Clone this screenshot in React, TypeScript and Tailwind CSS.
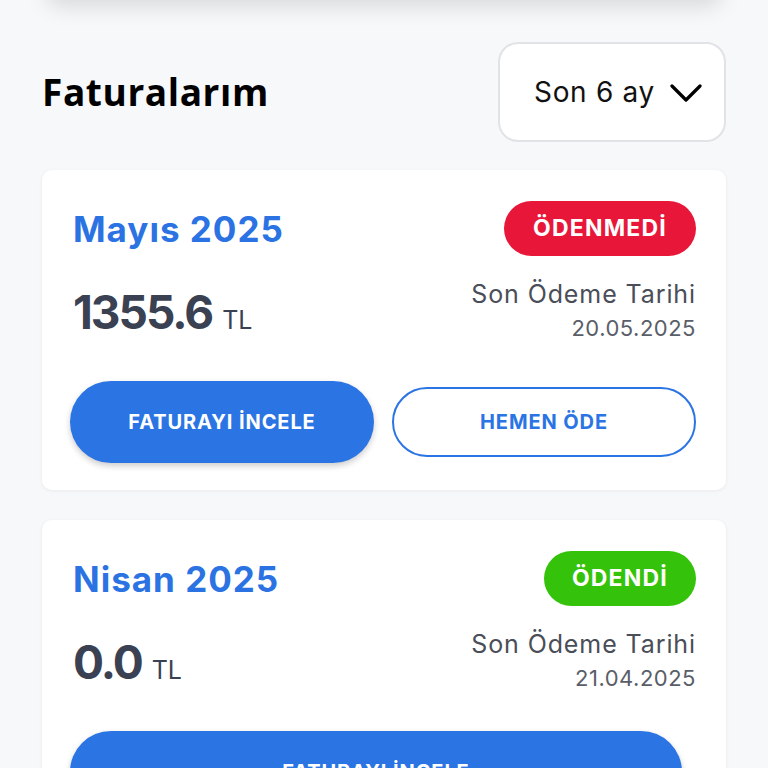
type Invoice = {
  month: string;
  amount: string;
  due: string;
  paid: boolean;
};

const invoices: Invoice[] = [
  { month: "Mayıs 2025", amount: "1355.6", due: "20.05.2025", paid: false },
  { month: "Nisan 2025", amount: "0.0", due: "21.04.2025", paid: true },
];

function InvoiceCard({ inv }: { inv: Invoice }) {
  return (
    <div className="bg-white rounded-[10px] shadow-[0_1px_4px_rgba(0,0,0,0.06)] pl-[31px] pr-[30px] pt-[31px] pb-[27px]">
      <div className="flex justify-between items-start">
        <div className="text-[35px] leading-[56px] font-bold text-[#2b73e3] tracking-[1px]">{inv.month}</div>
        <div
          className={
            inv.paid
              ? "h-[55px] px-[28px] rounded-full bg-[#35c20b] text-white text-[23px] font-bold flex items-center tracking-[1.2px]"
              : "h-[55px] px-[29px] rounded-full bg-[#e8173a] text-white text-[23px] font-bold flex items-center tracking-[1.2px]"
          }
        >
          {inv.paid ? "ÖDENDİ" : "ÖDENMEDİ"}
        </div>
      </div>
      <div className="flex justify-between items-start mt-[21px]">
        <div className="flex items-baseline gap-[10px] mt-[10px]">
          <span className="text-[46px] leading-[48px] font-bold text-[#3a4152] tracking-[-2px]">{inv.amount}</span>
          <span className="text-[25px] text-[#3a4152]">TL</span>
        </div>
        <div className="text-right">
          <div className="text-[25px] leading-[32px] text-[#4a4e58] tracking-[0.9px]">Son Ödeme Tarihi</div>
          <div className="text-[22px] leading-[32px] text-[#5a5e68] mt-[2px] tracking-[0.5px]">{inv.due}</div>
        </div>
      </div>
      <div className="flex items-center gap-[18px] mt-[37px] -ml-[3px]">
        {inv.paid ? (
          <button className="h-[82px] w-[612px] rounded-full bg-[#2b74e4] text-white text-[20px] font-bold shadow-[0_3px_6px_rgba(0,0,0,0.2)] tracking-[0.9px]">
            FATURAYI İNCELE
          </button>
        ) : (
          <>
            <button className="h-[82px] w-[305px] rounded-full bg-[#2b74e4] text-white text-[20px] font-bold shadow-[0_3px_6px_rgba(0,0,0,0.2)] tracking-[0.9px]">
              FATURAYI İNCELE
            </button>
            <button className="h-[70px] w-[305px] rounded-full border-2 border-[#2b74e4] bg-white text-[#2b74e4] text-[20px] font-bold tracking-[0.9px]">
              HEMEN ÖDE
            </button>
          </>
        )}
      </div>
    </div>
  );
}

export default function App() {
  return (
    <div className="h-[768px] overflow-hidden bg-[#f7f8fa] px-[42px] font-['Inter',sans-serif]">
      {/* bottom edge of the card above, only its shadow is visible */}
      <div className="mx-[4px] h-[40px] -mt-[42px] bg-white rounded-[14px] shadow-[0_8px_22px_rgba(0,0,0,0.13)]" />
      <div className="flex justify-between items-center mt-[44px]">
        <h1 className="text-[37px] font-bold text-black font-['Open_Sans',sans-serif] tracking-[0.6px]">Faturalarım</h1>
        <div className="h-[100px] w-[228px] rounded-[20px] border-2 border-[#e2e3e6] bg-white flex items-center justify-center gap-[15px] pl-[12px]">
          <span className="text-[28px] text-[#111] tracking-[0.7px]">Son 6 ay</span>
          <svg width="32" height="20" viewBox="0 0 32 20" fill="none" className="mt-[2px]">
            <polyline points="2,3 16,17 30,3" stroke="#000" strokeWidth="3.2" strokeLinecap="round" strokeLinejoin="round" />
          </svg>
        </div>
      </div>
      <div className="mt-[28px] flex flex-col gap-[30px]">
        {invoices.map((inv) => (
          <InvoiceCard key={inv.month} inv={inv} />
        ))}
      </div>
    </div>
  );
}
